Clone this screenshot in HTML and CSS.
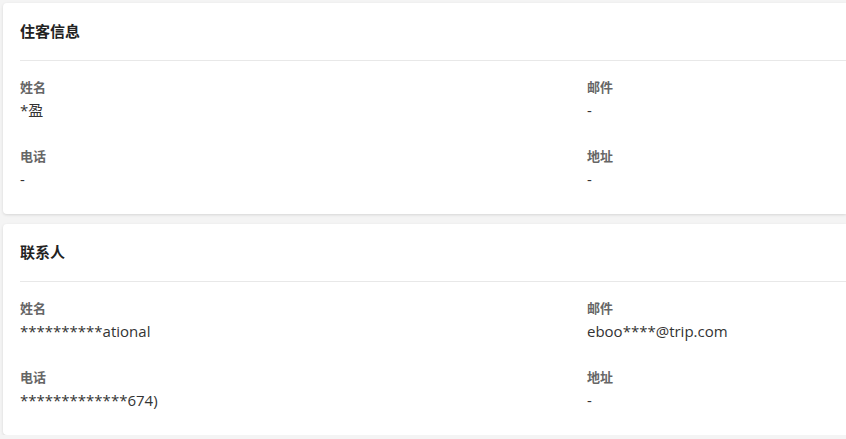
FILE: index.html
```html
<!DOCTYPE html>
<html lang="zh-CN">
<head>
<meta charset="utf-8">
<link rel="stylesheet" href="styles.css">
</head>
<body>
<div class="page">
  <section class="card">
    <div class="card-head"><h2 class="card-title">住客信息</h2></div>
    <div class="card-body">
      <div class="field"><div class="label">姓名</div><div class="value">*盈</div></div>
      <div class="field"><div class="label">邮件</div><div class="value">-</div></div>
      <div class="field"><div class="label">电话</div><div class="value">-</div></div>
      <div class="field"><div class="label">地址</div><div class="value">-</div></div>
    </div>
  </section>
  <section class="card">
    <div class="card-head"><h2 class="card-title">联系人</h2></div>
    <div class="card-body">
      <div class="field"><div class="label">姓名</div><div class="value">**********ational</div></div>
      <div class="field"><div class="label">邮件</div><div class="value">eboo****@trip.com</div></div>
      <div class="field"><div class="label">电话</div><div class="value">*************674)</div></div>
      <div class="field"><div class="label">地址</div><div class="value">-</div></div>
    </div>
  </section>
</div>
</body>
</html>
```
FILE: styles.css
```css
html, body {
  margin: 0;
  padding: 0;
  background: #f4f4f4;
  overflow: hidden;
}
body {
  font-family: "Open Sans", "Noto Sans CJK SC", sans-serif;
  color: #333;
}
.page {
  padding: 3px 0 0 3px;
  display: flex;
  flex-direction: column;
  gap: 10px;
}
.card {
  background: #fff;
  border-radius: 4px 0 0 4px;
  box-shadow: 0 1px 3px rgba(0, 0, 0, 0.12);
}
.card-head {
  margin: 0 0 0 17px;
  height: 57px;
  border-bottom: 1px solid #e8e8e8;
  display: flex;
  align-items: center;
}
.card-title {
  margin: 0;
  font-size: 15px;
  font-weight: 700;
  color: #222;
  line-height: 20px;
  position: relative;
  top: -1px;
}
.card-body {
  padding: 17px 0 25px 17px;
  display: grid;
  grid-template-columns: 567px 1fr;
  row-gap: 27px;
}
.label {
  font-size: 13px;
  line-height: 18px;
  font-weight: 600;
  color: #666;
}
.value {
  margin-top: 4px;
  font-size: 15px;
  line-height: 20px;
  color: #333;
}
```
